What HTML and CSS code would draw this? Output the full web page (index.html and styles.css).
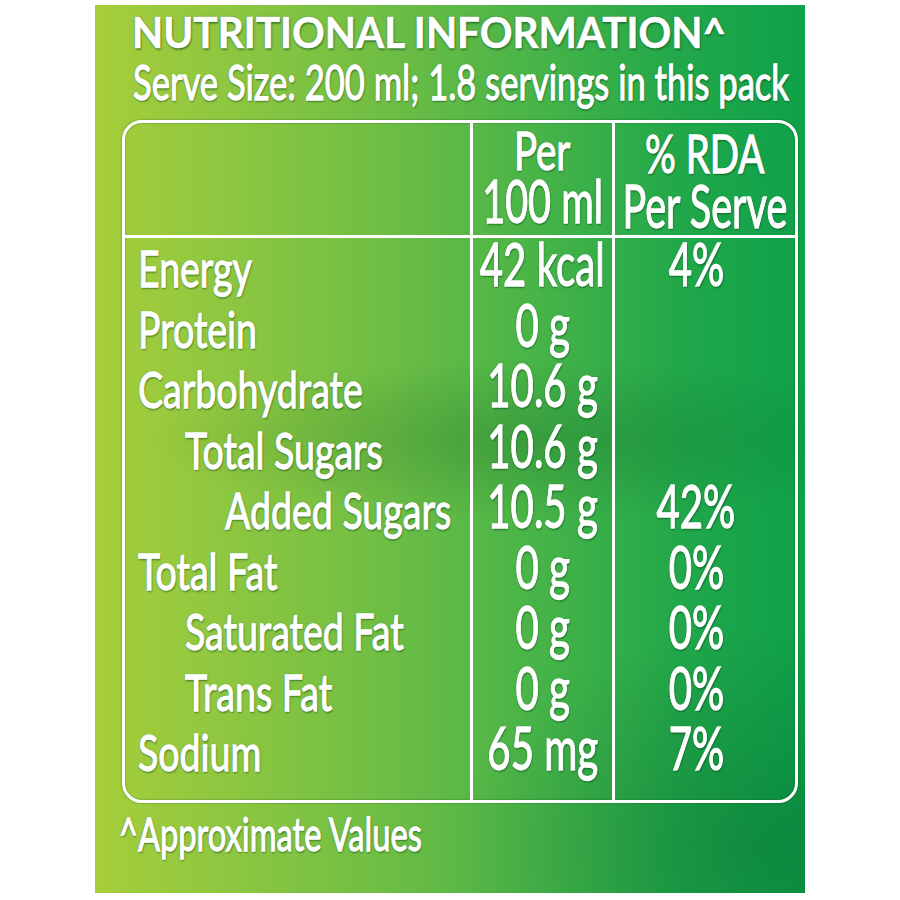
FILE: index.html
```html
<!DOCTYPE html>
<html lang="en">
<head>
<meta charset="utf-8">
<title>Nutritional Information</title>
<link rel="stylesheet" href="styles.css">
</head>
<body>
<div class="panel">
  <div class="title"><span class="t tb">NUTRITIONAL INFORMATION^</span></div>
  <div class="serve"><span class="t ts">Serve Size: 200 ml; 1.8 servings in this pack</span></div>

  <div class="tbl">
    <div class="hcell"></div>
    <div class="hcell col2">
      <div class="hl"><span class="t tc hs1">Per</span></div>
      <div class="hl"><span class="t tc hs2">100 ml</span></div>
    </div>
    <div class="hcell col3">
      <div class="hl"><span class="t tc hs1">% RDA</span></div>
      <div class="hl"><span class="t tc hs2">Per Serve</span></div>
    </div>

    <div class="bcol labels">
      <div class="row"><span class="t tl">Energy</span></div>
      <div class="row"><span class="t tl">Protein</span></div>
      <div class="row"><span class="t tl">Carbohydrate</span></div>
      <div class="row i1"><span class="t tl">Total Sugars</span></div>
      <div class="row i2"><span class="t tl">Added Sugars</span></div>
      <div class="row"><span class="t tl">Total Fat</span></div>
      <div class="row i1"><span class="t tl">Saturated Fat</span></div>
      <div class="row i1"><span class="t tl">Trans Fat</span></div>
      <div class="row"><span class="t tl">Sodium</span></div>
    </div>
    <div class="bcol col2 vals">
      <div class="row"><span class="t tc v">42 kcal</span></div>
      <div class="row"><span class="t tc v">0 g</span></div>
      <div class="row"><span class="t tc v">10.6 g</span></div>
      <div class="row"><span class="t tc v">10.6 g</span></div>
      <div class="row"><span class="t tc v">10.5 g</span></div>
      <div class="row"><span class="t tc v">0 g</span></div>
      <div class="row"><span class="t tc v">0 g</span></div>
      <div class="row"><span class="t tc v">0 g</span></div>
      <div class="row"><span class="t tc v">65 mg</span></div>
    </div>
    <div class="bcol col3 vals rda">
      <div class="row"><span class="t tc v">4%</span></div>
      <div class="row"></div>
      <div class="row"></div>
      <div class="row"></div>
      <div class="row"><span class="t tc v">42%</span></div>
      <div class="row"><span class="t tc v">0%</span></div>
      <div class="row"><span class="t tc v">0%</span></div>
      <div class="row"><span class="t tc v">0%</span></div>
      <div class="row"><span class="t tc v">7%</span></div>
    </div>
  </div>

  <div class="foot"><span class="t tf">^Approximate Values</span></div>
</div>
</body>
</html>
```

FILE: styles.css
```css
html, body {
  margin: 0;
  padding: 0;
  background: #ffffff;
}

body {
  font-family: Lato, "Noto Sans", "Liberation Sans", sans-serif;
  color: #ffffff;
}

.panel {
  box-sizing: border-box;
  width: 710px;
  height: 888px;
  margin: 5px 0 0 95px;
  padding-top: 6px;
  overflow: hidden;
  background:
    radial-gradient(ellipse 55% 9% at 62% 49%, rgba(10, 90, 30, 0.26), rgba(10, 90, 30, 0) 100%),
    radial-gradient(ellipse 45% 25% at 95% 95%, rgba(0, 90, 40, 0.35), rgba(0, 90, 40, 0) 100%),
    linear-gradient(90deg, #a6ce3a 0%, #8fc740 18%, #70be44 40%, #48b448 62%, #22a84a 82%, #0ea14a 100%);
}

.t {
  display: inline-block;
  white-space: nowrap;
  line-height: 50px;
  transform-origin: 0 50%;
  -webkit-text-stroke: 1.3px #ffffff;
  text-shadow: 0 0 2px rgba(0, 70, 20, 0.8), 1px 2px 2px rgba(0, 60, 20, 0.45);
}

.tc {
  transform-origin: 50% 50%;
}

.title {
  height: 42px;
  line-height: 42px;
  font-size: 42px;
  padding-left: 37px;
}

.tb {
  font-weight: 700;
  line-height: 42px;
  transform: scaleX(0.965);
  -webkit-text-stroke: 0.6px #ffffff;
}

.serve {
  height: 50px;
  line-height: 50px;
  font-size: 49px;
  margin-top: 3px;
  padding-left: 38px;
}

.ts {
  transform: scaleX(0.705);
}

.tbl {
  display: grid;
  grid-template-columns: 345px 142px 183px;
  width: 676px;
  box-sizing: border-box;
  margin: 14px 0 0 27px;
  border: 3px solid #ffffff;
  border-radius: 20px;
  box-shadow: 0 0 2px rgba(0, 70, 20, 0.6), inset 0 0 2px rgba(0, 70, 20, 0.6);
}

.hcell {
  box-sizing: border-box;
  height: 115px;
  border-bottom: 3px solid #ffffff;
  font-size: 50px;
  padding-top: 2px;
}

.hcell.col3 {
  padding-top: 5px;
}

.col2, .col3 {
  border-left: 3px solid #ffffff;
}

.hl {
  display: flex;
  justify-content: center;
  height: 50px;
  line-height: 50px;
}

.col3 .hl {
  height: 52px;
  line-height: 52px;
}

.hs1 {
  font-size: 52px;
  transform: scaleX(0.74);
}

.hs2 {
  font-size: 60px;
  transform: scaleX(0.66);
}

.bcol {
  padding-bottom: 17px;
  font-size: 50px;
}

.row {
  height: 60.5px;
  line-height: 60.5px;
}

.tl {
  transform: scaleX(0.75);
}

.labels .row {
  padding-left: 13px;
}

.labels .row.i1 {
  padding-left: 60px;
}

.labels .row.i2 {
  padding-left: 100px;
}

.vals .row {
  display: flex;
  justify-content: center;
  align-items: baseline;
}

.rda .row {
  padding-right: 18px;
}

.v {
  font-size: 60px;
  transform: scaleX(0.67);
}

.foot {
  height: 46px;
  line-height: 46px;
  font-size: 46px;
  margin-top: 6px;
  padding-left: 24px;
}

.tf {
  transform: scaleX(0.71);
}
```
